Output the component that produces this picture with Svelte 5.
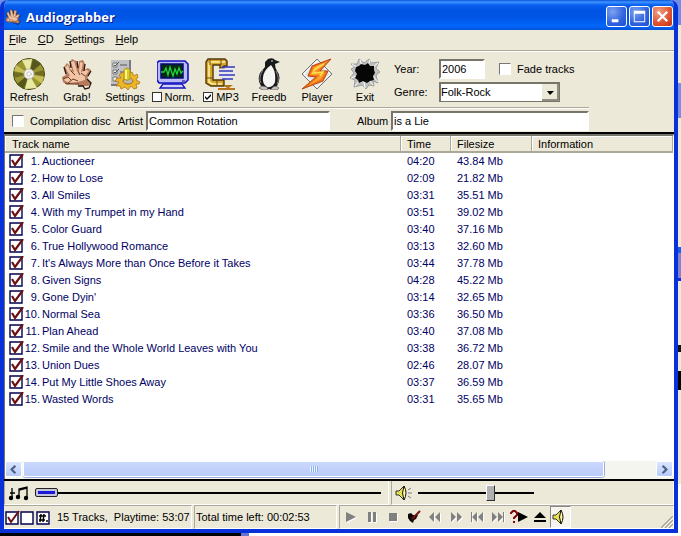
<script lang="ts">
  let tracks = $state([
    { title: "Auctioneer", time: "04:20", size: "43.84 Mb", checked: true },
    { title: "How to Lose", time: "02:09", size: "21.82 Mb", checked: true },
    { title: "All Smiles", time: "03:31", size: "35.51 Mb", checked: true },
    { title: "With my Trumpet in my Hand", time: "03:51", size: "39.02 Mb", checked: true },
    { title: "Color Guard", time: "03:40", size: "37.16 Mb", checked: true },
    { title: "True Hollywood Romance", time: "03:13", size: "32.60 Mb", checked: true },
    { title: "It's Always More than Once Before it Takes", time: "03:44", size: "37.78 Mb", checked: true },
    { title: "Given Signs", time: "04:28", size: "45.22 Mb", checked: true },
    { title: "Gone Dyin'", time: "03:14", size: "32.65 Mb", checked: true },
    { title: "Normal Sea", time: "03:36", size: "36.50 Mb", checked: true },
    { title: "Plan Ahead", time: "03:40", size: "37.08 Mb", checked: true },
    { title: "Smile and the Whole World Leaves with You", time: "03:38", size: "36.72 Mb", checked: true },
    { title: "Union Dues", time: "02:46", size: "28.07 Mb", checked: true },
    { title: "Put My Little Shoes Away", time: "03:37", size: "36.59 Mb", checked: true },
    { title: "Wasted Words", time: "03:31", size: "35.65 Mb", checked: true },
  ]);

  const menus = ["File", "CD", "Settings", "Help"];
  const tools = ["Refresh", "Grab!", "Settings", "Norm.", "MP3", "Freedb", "Player", "Exit"];
  const transport = ["play", "pause", "stop", "grab", "rewind", "forward", "prev", "next", "query", "eject"];

  let normalize = $state(false);
  let mp3 = $state(true);
  let fade = $state(false);
  let compilation = $state(false);
  let year = $state("2006");
  let genre = $state("Folk-Rock");
  let artist = $state("Common Rotation");
  let album = $state("is a Lie");
  let position = $state(0);
  let volume = $state(64);

  const setAll = (on: boolean) => {
    tracks.forEach((t) => (t.checked = on));
  };
</script>

{#snippet hand()}
  <path d="M3 9 6 5 9 8 9 11 11 12 9 4 11 1 15 3 17 9 18 3 22 2 24 6 23 12 27 10 30 12 28 17 26 21 30 25 27 28 20 28 14 26 6 27 2 24 1 19 5 17 4 13Z" fill="#b67a5c" />
  <path d="M4 9 7 7 9 13 13 14 10 4 13 3 16 13 18 13 19 4 22 5 20 14 25 12 28 13 24 18 24 22 17 24 7 25 3 22 5 19 9 18Z" fill="#f0c4a4" />
  <path d="M2 21 7 19 10 22M7 25 12 21 17 23M10 13 14 17M17 13 19 17M4 25 12 26 18 26M20 15 24 18" stroke="#693c28" fill="none" />
  <path d="M24 6 23 13M30 13 27 18M26 21 30 25 28 30 24 31 22 28 17 28M3 9 5 16M16 3 17 10M9 3 10 10" stroke="#2b1510" fill="none" stroke-width="1.3" />
{/snippet}

{#snippet toolIcon(name: string)}
  <svg class="tool-icon" viewBox="0 0 32 32" aria-hidden="true">
    {#if name === "Refresh"}
      <circle cx="16" cy="16" r="15.5" fill="#9a9733" stroke="#454516" />
      <path d="M16 16 9 2 19 1ZM16 16 24 30 12 31Z" fill="#e9e8a4" />
      <path d="M16 16 1 13 3 7ZM16 16 31 19 29 26Z" fill="#c7bf55" />
      <path d="M16 16 20 1 28 6ZM16 16 11 31 4 26Z" fill="#56571d" />
      <path d="M16 16 31 12 31 18ZM16 16 1 20 1 14Z" fill="#716b20" />
      <circle cx="16" cy="16" r="5" fill="#f5f5ee" stroke="#bbb" />
      <circle cx="16" cy="16" r="2" fill="#fff" stroke="#888" stroke-dasharray="1 1" />
    {:else if name === "Grab!"}
      {@render hand()}
    {:else if name === "Settings"}
      <path d="M2 2H21V27H2Z" fill="#c0c1c4" />
      <path d="M21 2V27M2 27H20" stroke="#777a82" stroke-width="2" />
      <path d="M4 5H8V9H4ZM4 12H8V16H4ZM4 19H8V23H4Z" fill="#eee" stroke="#777" />
      <path d="M5 7 6 8 10 4M5 14 6 15 10 11M11 7H18M11 14H16" stroke="#555" fill="none" />
      <path d="M14 14 17 16H20L23 14 25 18 28 16 29 19 27 22 31 24 30 26 27 26 28 30 25 31 22 28 19 32 16 29 12 31 11 28 7 28 10 24 6 23 8 20 12 20 10 17Z" fill="#edb528" stroke="#a46d0c" stroke-width=".7" />
      <ellipse cx="19" cy="23" rx="5" ry="3" fill="#bcb9b4" stroke="#9c6f17" />
      <path d="M15 12Q18 8 21 12V21Q18 24 15 21Z" fill="#dcca24" stroke="#a99722" />
      <path d="M17 12V21" stroke="#fff48a" stroke-width="2" />
    {:else if name === "Norm."}
      <path d="M2 3H28L31 6V22L28 25H2L0 22V5Z" fill="#b9b9f8" stroke="#1010c0" stroke-width="1.6" />
      <path d="M4 6H26V20H4Z" fill="#062a13" stroke="#000a70" stroke-width="1.5" />
      <path d="M4 14H7L9 10 11 17 13 9 16 18 18 11 20 16 22 10 24 15 26 13" stroke="#21d63a" fill="none" stroke-width="1.3" />
      <path d="M6 26H25L28 30H3Z" fill="#d0d0fa" stroke="#1515bd" stroke-width="1.3" />
      <path d="M25 23H28" stroke="#0a0a80" />
    {:else if name === "MP3"}
      <path d="M3 1H20L22 3V8H19V10H15V7H8V22H19V28H6L1 25V4Z" fill="#d7a72c" stroke="#54380a" stroke-width="1.4" />
      <path d="M4 4H20M4 5V24L7 26H17" stroke="#fff0a0" stroke-width="1.6" fill="none" />
      <path d="M5 1V7M16 1V7M1 20H8M12 22V28" stroke="#6b4a11" />
      <path d="M17 9H30M14 13H28M14 17H30M17 21H28" stroke="#3038c4" stroke-width="1.5" />
      <path d="M15 11H27M15 15H30M15 19H27" stroke="#dfe4ff" />
      <path d="M20 28H25L21 31H25M13 31H30" stroke="#b7751b" stroke-width="2" fill="none" />
    {:else if name === "Freedb"}
      <path d="M15 1Q20-1 22 2L27 4 22 6Q22 10 24 13 29 19 24 28L21 31H11L8 28Q4 22 7 15L12 9V4Z" fill="#17191a" />
      <path d="M18 7Q11 12 10 19 9 26 14 29 20 30 22 24 23 15 20 10Z" fill="#f5f5f2" />
      <path d="M10 12Q5 20 8 25M23 13Q27 21 24 26" stroke="#858585" fill="none" />
      <path d="M9 28 6 30 10 32H15L14 29ZM20 29 17 32H24L26 30 23 28Z" fill="#c6c4b9" stroke="#565656" stroke-width=".7" />
      <circle cx="19" cy="3" r=".8" fill="#fff" />
    {:else if name === "Player"}
      <path d="M16 1 31 16 16 31 1 16Z" fill="#e4e4e2" stroke="#747474" />
      <path d="M16 3 29 16 16 29 3 16Z" fill="none" stroke="#fff" />
      <path d="M30 1 11 8 7 18 15 19 1 31 22 23 27 13 19 13Z" fill="#ef751a" stroke="#b84411" />
      <path d="M27 3 13 9 9 17H19L7 28 20 21 24 15 15 14Z" fill="#ff9f29" />
      <path d="M23 6 14 11 12 15 22 14 19 18" stroke="#ffe050" fill="none" stroke-width="1.5" />
    {:else if name === "Exit"}
      <path d="M2 6 8 6 10 1 15 5 20 1 22 5 30 4 27 10 31 14 27 17 29 25 24 23 25 28 20 27 17 31 13 27 5 29 6 22 1 20 5 15 2 11 6 9Z" fill="#bfc1c0" stroke="#868886" stroke-width=".7" />
      <path d="M3 6 9 10M11 2 13 8M21 2 19 8M29 5 23 10M2 20 7 18M6 28 11 22M16 30 15 24M24 27 21 23M29 24 24 18" stroke="#fff" />
      <path d="M7 9 10 8 12 6 16 7 19 5 21 8 25 8 25 12 26 15 24 18 25 22 21 23 18 25 14 23 10 25 9 22 6 20 8 16 6 13Z" fill="#060606" />
    {/if}
  </svg>
{/snippet}

{#snippet transportIcon(name: string)}
  <svg class="transport-icon" viewBox="0 0 18 14" aria-hidden="true">
    {#if name === "play"}
      <path d="M5 3 15 8 5 13Z" fill="#fff" /><path d="M4 2 14 7 4 12Z" />
    {:else if name === "pause"}
      <path d="M6 3H9V13H6ZM11 3H14V13H11Z" fill="#fff" /><path d="M5 2H8V12H5ZM10 2H13V12H10Z" />
    {:else if name === "stop"}
      <path d="M6 4H14V12H6Z" fill="#fff" /><path d="M5 3H13V11H5Z" />
    {:else if name === "grab"}
      <path d="M3 4 6 3 8 5 13 5 11 9 9 10 8 13 5 11 3 8Z" fill="#100808" />
      <path d="M7 9 15 1" stroke="#7a1010" stroke-width="2" />
    {:else if name === "rewind"}
      <path d="M9 3V13L4 8ZM15 3V13L10 8Z" fill="#fff" /><path d="M8 2V12L3 7ZM14 2V12L9 7Z" />
    {:else if name === "forward"}
      <path d="M5 3V13L10 8ZM11 3V13L16 8Z" fill="#fff" /><path d="M4 2V12L9 7ZM10 2V12L15 7Z" />
    {:else if name === "prev"}
      <path d="M10 3V13L5 8ZM16 3V13L11 8ZM4 3H5V13H4Z" fill="#fff" /><path d="M9 2V12L4 7ZM15 2V12L10 7ZM3 2H4V12H3Z" />
    {:else if name === "next"}
      <path d="M4 3V13L9 8ZM10 3V13L15 8ZM15 3H16V13H15Z" fill="#fff" /><path d="M3 2V12L8 7ZM9 2V12L14 7ZM14 2H15V12H14Z" />
    {:else if name === "query"}
      <path d="M1 4V3L3 1H5L7 3V5L4 8V9M4 11V13" fill="none" stroke="#7a0808" stroke-width="2" />
      <path d="M8 2 18 7 8 12Z" fill="#000" />
    {:else if name === "eject"}
      <path d="M9 2 15 8H3ZM3 10H15V12H3Z" fill="#000" />
    {/if}
  </svg>
{/snippet}

{#snippet speaker(waves: boolean)}
  <svg class="speaker" viewBox="0 0 18 16" aria-hidden="true">
    <path d="M1 6H4L9 1V15L4 10H1Z" fill="#e5df54" stroke="#333" />
    <path d="M9 1Q6 8 9 15M9 1Q13 8 9 15" fill="#fff9a0" stroke="#111" />
    {#if waves}
      <path d="M13 5 16 3M13 8H17M13 11 16 13" stroke="#777" />
    {/if}
  </svg>
{/snippet}

<div class="desktop">
  <main class="window">
    <header class="titlebar">
      <svg class="app-icon" viewBox="0 0 32 32" aria-hidden="true">{@render hand()}</svg>
      <h1>Audiograbber</h1>
      <button class="caption" aria-label="Minimize">
        <svg viewBox="0 0 20 20"><path d="M5 13H12V16H5Z" fill="#fff" /></svg>
      </button>
      <button class="caption" aria-label="Maximize">
        <svg viewBox="0 0 20 20"><path d="M4 4H16V16H4ZM5 7V15H15V7Z" fill="#fff" fill-rule="evenodd" /></svg>
      </button>
      <button class="caption close" aria-label="Close">
        <svg viewBox="0 0 20 20"><path d="M5 5 15 15M15 5 5 15" stroke="#fff" stroke-width="2.4" /></svg>
      </button>
    </header>

    <nav class="menubar">
      {#each menus as menu}
        <button><u>{menu[0]}</u>{menu.slice(1)}</button>
      {/each}
    </nav>

    <section class="toolbar">
      <div class="tools">
        {#each tools as tool}
          <div class="tool">
            {#if tool === "Norm."}
              {@render toolIcon(tool)}
              <label><input class="small-check" type="checkbox" bind:checked={normalize} />{tool}</label>
            {:else if tool === "MP3"}
              {@render toolIcon(tool)}
              <label><input class="small-check" type="checkbox" bind:checked={mp3} />{tool}</label>
            {:else}
              <button>{@render toolIcon(tool)}<span>{tool}</span></button>
            {/if}
          </div>
        {/each}
      </div>
      <div class="meta">
        <label for="year">Year:</label>
        <div class="meta-row">
          <input id="year" class="field year" type="text" bind:value={year} />
          <label class="check-label"><input class="check" type="checkbox" bind:checked={fade} />Fade tracks</label>
        </div>
        <label for="genre">Genre:</label>
        <select id="genre" class="field" bind:value={genre}>
          <option>Folk-Rock</option>
          <option>Folk</option>
          <option>Rock</option>
        </select>
      </div>
    </section>

    <section class="disc">
      <div class="disc-fields">
        <label class="check-label"><input class="check" type="checkbox" bind:checked={compilation} />Compilation disc</label>
        <label class="artist">Artist <input class="field" type="text" bind:value={artist} /></label>
        <label class="album">Album <input class="field" type="text" bind:value={album} /></label>
      </div>
    </section>

    <section class="list">
      <div class="list-body">
        <table>
          <thead>
            <tr>
              <th class="col-name">Track name</th>
              <th class="col-time">Time</th>
              <th class="col-size">Filesize</th>
              <th>Information</th>
            </tr>
          </thead>
          <tbody>
            {#each tracks as track, i}
              <tr>
                <td>
                  <label class="track">
                    <input class="track-check" type="checkbox" bind:checked={track.checked} />
                    <span class="number">{i + 1}.</span>{track.title}
                  </label>
                </td>
                <td>{track.time}</td>
                <td>{track.size}</td>
                <td></td>
              </tr>
            {/each}
          </tbody>
        </table>
      </div>
      <div class="scrollbar">
        <button aria-label="Scroll left"><svg viewBox="0 0 16 16"><path d="M10 4 6 8 10 12" /></svg></button>
        <div class="scroll-track"><div class="scroll-thumb"><span class="grip"></span></div></div>
        <button aria-label="Scroll right"><svg viewBox="0 0 16 16"><path d="M6 4 10 8 6 12" /></svg></button>
      </div>
    </section>

    <section class="sliders">
      <div class="panel seek">
        <svg class="notes" viewBox="0 0 22 16" aria-hidden="true">
          <path d="M4 3V13M2 8H7M11 12V4L19 2V13M11 5 19 3" fill="none" stroke="#000" stroke-width="1.3" />
          <circle cx="3" cy="13" r="2.2" /><circle cx="10" cy="12" r="2.2" /><circle cx="18" cy="13" r="2.2" />
        </svg>
        <input type="range" aria-label="Position" bind:value={position} />
      </div>
      <div class="panel volume">
        {@render speaker(true)}
        <input type="range" aria-label="Volume" bind:value={volume} />
      </div>
    </section>

    <footer class="status">
      <div class="panel summary">
        <button class="mini" aria-label="Select all tracks" onclick={() => setAll(true)}>
          <svg viewBox="0 0 15 15"><path d="M1 2H13V14H1Z" fill="#fff" stroke="#000050" stroke-width="1.4" /><path d="M3 7 6 12 14 1" fill="none" stroke="#6d1010" stroke-width="2" /></svg>
        </button>
        <button class="mini" aria-label="Clear all tracks" onclick={() => setAll(false)}>
          <svg viewBox="0 0 15 15"><path d="M1 2H13V14H1Z" fill="#fff" stroke="#000050" stroke-width="1.4" /></svg>
        </button>
        <button class="mini" aria-label="Number tracks">
          <svg viewBox="0 0 15 15"><path d="M1 2H13V14H1Z" fill="#fff" stroke="#000050" stroke-width="1.4" /><path d="M5 4 4 12M8 4 7 12M3 6H10M3 10H9M11 10V12" stroke="#000" stroke-width="1.5" /></svg>
        </button>
        <span>15 Tracks,&nbsp; Playtime: 53:07</span>
      </div>
      <div class="panel time-left">Total time left: 00:02:53</div>
      <div class="panel transport">
        {#each transport as name}
          <button aria-label={name}>{@render transportIcon(name)}</button>
        {/each}
        <button class="sound" aria-label="Sound" aria-pressed="true">{@render speaker(false)}</button>
        <svg class="resize" viewBox="0 0 12 12" aria-hidden="true">
          <path d="M0 12 12 0M4 12 12 4M8 12 12 8" stroke="#a5a290" stroke-width="1.4" />
          <path d="M2 12 12 2M6 12 12 6M10 12 12 10" stroke="#fff" />
        </svg>
      </div>
    </footer>
  </main>
</div>

<style>
  :global(body) {
    margin: 0;
  }

  .desktop {
    --face: #ece9d8;
    --shadow: #aca899;
    --blue: #0831d9;
    box-sizing: border-box;
    height: 100vh;
    min-height: 500px;
    padding: 0 3px 3px 0;
    background:
      linear-gradient(to right, #000 241px, #6674d8 241px, #6674d8 249px, #fff 249px) bottom / 100% 3px no-repeat,
      linear-gradient(#6f8fe8 25px, var(--face) 25px, var(--face) 83px, #7890e4 83px, #7890e4 118px, var(--face) 118px, var(--face) 247px, #1560ee 247px, #1560ee 253px, #8583cf 253px, #8583cf 278px, #0831d9 278px, #0831d9 281px, var(--face) 281px, var(--face) 345px, #111 345px, #111 352px, var(--face) 352px, var(--face) 371px, #000 371px, #000 390px, var(--face) 390px, var(--face) 484px, #fff 484px);
    font: 11px/14px "Liberation Sans", Arial, sans-serif;
    color: #000;
  }

  button,
  input,
  select {
    box-sizing: border-box;
    margin: 0;
    font: inherit;
    color: inherit;
  }

  button {
    padding: 0;
    border: none;
    background: none;
  }

  svg {
    display: block;
    flex: none;
  }

  .window {
    display: flex;
    flex-direction: column;
    box-sizing: border-box;
    height: 100%;
    border: solid var(--blue);
    border-width: 0 4px 4px;
    border-radius: 8px 8px 0 0;
    background: var(--face);
    overflow: hidden;
  }

  .titlebar {
    display: flex;
    align-items: center;
    gap: 2px;
    flex: none;
    height: 30px;
    padding: 3px 1px 0;
    box-sizing: border-box;
    background: linear-gradient(#0a50d8, #3d95ff 2px, #0a5fee 5px, #0054e3 10px, #0055e5 18px, #0266fc 26px, #0453d8 30px);
    box-shadow: -4px 0 #0453dd, 4px 0 #0444c8;
  }

  .app-icon {
    width: 16px;
    height: 16px;
  }

  h1 {
    flex: 1;
    margin: 0;
    padding-left: 3px;
    font: bold 13px/20px "Open Sans", sans-serif;
    color: #fff;
    text-shadow: 1px 1px #0a1883;
  }

  .caption {
    width: 21px;
    height: 21px;
    border: 1px solid #fff;
    border-radius: 3px;
    background: radial-gradient(circle at 30% 25%, #7ba2f0, #2f62df 60%, #1a50d0);
  }

  .caption.close {
    background: radial-gradient(circle at 30% 25%, #f0a082, #df5130 60%, #c03010);
  }

  .caption svg {
    width: 19px;
    height: 19px;
  }

  .menubar {
    display: flex;
    align-items: flex-start;
    gap: 11px;
    flex: none;
    height: 20px;
    padding: 2px 0 0 5px;
    box-sizing: content-box;
    height: 18px;
    border-bottom: 1px solid var(--shadow);
  }

  .toolbar {
    display: flex;
    flex: none;
    height: 55px;
    border-top: 1px solid #fff;
  }

  .tools {
    display: grid;
    grid-template-columns: repeat(8, 48px);
    padding: 6px 0 0 1px;
  }

  .tool,
  .tool button {
    display: flex;
    flex-direction: column;
    align-items: center;
    white-space: nowrap;
  }

  .tool-icon {
    width: 32px;
    height: 32px;
  }

  .tool label {
    display: flex;
    align-items: center;
    gap: 3px;
  }

  .small-check,
  .check {
    flex: none;
    appearance: none;
    width: 10px;
    height: 10px;
    border: 1px solid #333;
    background: #fff;
  }

  .check {
    width: 12px;
    height: 12px;
    border-color: #777 #fff #fff #777;
  }

  .small-check:checked,
  .check:checked {
    background: #fff url("data:image/svg+xml,%3Csvg xmlns='http://www.w3.org/2000/svg' viewBox='0 0 8 8'%3E%3Cpath d='M1 3 3 5 7 1V3L3 7 1 5Z'/%3E%3C/svg%3E");
  }

  .check-label {
    display: flex;
    align-items: center;
    gap: 6px;
    white-space: nowrap;
  }

  .meta {
    display: grid;
    grid-template-columns: 40px auto;
    grid-template-rows: 20px 20px;
    align-items: center;
    align-content: start;
    gap: 3px 5px;
    padding: 7px 0 0 5px;
  }

  .meta-row {
    display: flex;
    gap: 14px;
  }

  .field {
    height: 20px;
    padding: 0 1px;
    border: 2px solid;
    border-color: #77756a #fff #fff #77756a;
    border-radius: 0;
    background: #fff;
    outline: none;
  }

  .year {
    width: 46px;
  }

  select.field {
    appearance: none;
    width: 121px;
    padding: 0 18px 1px 0;
    border-color: #77756a;
    border-width: 2px 1px 1px 2px;
    background: #fff url("data:image/svg+xml,%3Csvg xmlns='http://www.w3.org/2000/svg' viewBox='0 0 17 17'%3E%3Cpath d='M0 0H17V17H0Z' fill='%23ece9d8'/%3E%3Cpath d='M16 0V16H0' fill='none' stroke='%23716f64' stroke-width='1.5'/%3E%3Cpath d='M5 7H12L8 11Z'/%3E%3C/svg%3E") right / 17px 17px no-repeat;
  }

  .disc {
    flex: none;
    border-bottom: 2px solid #000;
  }

  .disc-fields {
    display: grid;
    grid-template-columns: 106px 212px 1fr;
    width: 585px;
    max-width: 100%;
    height: 25px;
    padding: 2px 0 0 8px;
    box-sizing: border-box;
    border-top: 1px solid var(--shadow);
    box-shadow: inset 0 1px #fff;
  }

  .artist,
  .album {
    display: grid;
    grid-template-columns: 28px 1fr;
    align-items: center;
  }

  .album {
    grid-template-columns: 34px 1fr;
    padding-left: 27px;
  }

  .artist .field,
  .album .field {
    min-width: 0;
    width: 100%;
  }

  .list {
    display: flex;
    flex-direction: column;
    flex: 1;
    min-height: 0;
    border: solid #77756a;
    border-width: 2px 0 0 1px;
    border-right: 1px solid #fff;
    background: #fff;
  }

  .list-body {
    flex: 1;
    min-height: 0;
    overflow: hidden;
  }

  table {
    width: 100%;
    border-collapse: separate;
    border-spacing: 0;
    table-layout: fixed;
  }

  th {
    height: 17px;
    box-sizing: border-box;
    padding: 2px 6px 0;
    border: solid var(--shadow);
    border-width: 0 1px 2px 0;
    box-shadow: inset 1px 1px #fff;
    background: var(--face);
    font-weight: normal;
    line-height: 13px;
    text-align: left;
  }

  .col-name {
    width: 396px;
    padding-left: 7px;
  }

  .col-time {
    width: 50px;
  }

  .col-size {
    width: 81px;
  }

  td {
    height: 17px;
    padding: 0 6px;
    line-height: 17px;
    white-space: nowrap;
    color: #000064;
  }

  td:first-child {
    padding: 0 4px;
  }

  .track {
    display: flex;
    align-items: center;
  }

  .number {
    width: 16px;
    padding-right: 2px;
    text-align: right;
  }

  .track-check {
    appearance: none;
    flex: none;
    width: 15px;
    height: 15px;
    background: url("data:image/svg+xml,%3Csvg xmlns='http://www.w3.org/2000/svg' viewBox='0 0 15 15'%3E%3Cpath d='M1 1H13V13H1Z' fill='%23fff' stroke='%23000050' stroke-width='1.4'/%3E%3C/svg%3E");
  }

  .track-check:checked {
    background: url("data:image/svg+xml,%3Csvg xmlns='http://www.w3.org/2000/svg' viewBox='0 0 15 15'%3E%3Cpath d='M1 1H13V13H1Z' fill='%23fff' stroke='%23000050' stroke-width='1.4'/%3E%3Cpath d='M3 6 6 11 14 0' fill='none' stroke='%236d1010' stroke-width='2.2'/%3E%3C/svg%3E");
  }

  .scrollbar {
    display: flex;
    gap: 1px;
    flex: none;
    height: 18px;
    background: #f5f5f0;
  }

  .scrollbar button {
    width: 17px;
    height: 16px;
    border: 1px solid #fff;
    border-radius: 2px;
    background: linear-gradient(#dbe5ff, #b7cbf9);
  }

  .scrollbar path {
    fill: none;
    stroke: #4d6185;
    stroke-width: 2.4;
  }

  .scroll-track {
    flex: 1;
  }

  .scroll-thumb {
    display: flex;
    align-items: center;
    justify-content: center;
    width: 92%;
    height: 16px;
    box-sizing: border-box;
    border: 1px solid #fff;
    border-radius: 2px;
    background: linear-gradient(#cbd8ff, #b9cbf8);
    box-shadow: 0 1px #98b0df, 1px 0 #98b0df;
  }

  .grip {
    width: 8px;
    height: 6px;
    background: repeating-linear-gradient(to right, #eef4fe 0, #eef4fe 1px, #8cb0f8 1px, #8cb0f8 2px);
  }

  .sliders {
    display: flex;
    gap: 2px;
    flex: none;
    height: 26px;
    border-top: 2px solid #000;
    box-sizing: border-box;
  }

  .panel {
    display: flex;
    align-items: center;
    box-sizing: border-box;
    border: 1px solid;
    border-color: var(--shadow) #fff #fff var(--shadow);
    white-space: nowrap;
  }

  .sliders .panel {
    border-top: none;
  }

  .seek {
    width: 385px;
    gap: 5px;
    padding: 0 7px 0 3px;
  }

  .notes {
    width: 22px;
    height: 16px;
  }

  .volume {
    flex: 1;
    gap: 5px;
    padding-left: 3px;
  }

  .speaker {
    width: 18px;
    height: 16px;
  }

  input[type="range"] {
    appearance: none;
    flex: 1;
    min-width: 0;
    height: 16px;
    background: linear-gradient(#000, #000) center / 100% 2px no-repeat;
  }

  .volume input[type="range"] {
    flex: none;
    width: 116px;
  }

  input[type="range"]::-webkit-slider-thumb {
    appearance: none;
    box-sizing: border-box;
    width: 9px;
    height: 16px;
    border: 1px solid;
    border-color: #fff #333 #333 #fff;
    background: #b0b0b0;
  }

  .seek input[type="range"]::-webkit-slider-thumb {
    width: 23px;
    height: 9px;
    border: 1px solid #222;
    border-radius: 2px;
    background: linear-gradient(#1a1ad8, #1a1ad8) center / 17px 3px no-repeat #c6c6d8;
  }

  .status {
    display: flex;
    gap: 2px;
    flex: none;
    height: 24px;
  }

  .summary {
    width: 188px;
    border-left: none;
    padding-left: 1px;
  }

  .summary span {
    padding-left: 6px;
  }

  .mini,
  .mini svg {
    width: 15px;
    height: 15px;
  }

  .mini:nth-child(3) {
    margin-left: 1px;
  }

  .time-left {
    width: 143px;
    padding-left: 1px;
  }

  .transport {
    flex: 1;
  }

  .transport button {
    display: flex;
    align-items: center;
    justify-content: center;
    width: 21px;
    height: 22px;
  }

  .transport-icon {
    width: 18px;
    height: 14px;
    fill: #808080;
  }

  .transport .sound {
    border: 1px solid;
    border-color: #888 #fff #fff #888;
    background: #f6f4ec;
  }

  .resize {
    width: 12px;
    height: 12px;
    margin-left: auto;
    align-self: flex-end;
  }
</style>
